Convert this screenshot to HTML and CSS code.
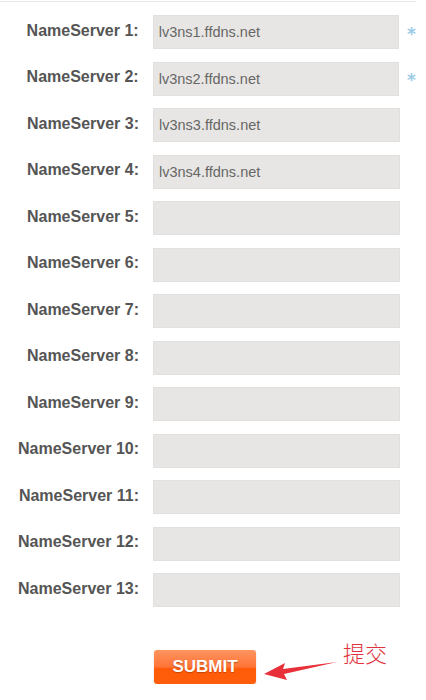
FILE: index.html
```html
<!DOCTYPE html>
<html lang="en">
<head>
    <meta charset="UTF-8">
    <meta name="viewport" content="width=device-width, initial-scale=1.0">
    <title>NameServer</title>
    <link rel="stylesheet" href="styles.css">
</head>
<body>
<div class="panel">
    <form class="nsform">
        <div class="row">
            <label for="ns1">NameServer 1:</label>
            <input type="text" id="ns1" value="lv3ns1.ffdns.net">
            <span class="req">*</span>
        </div>
        <div class="row">
            <label for="ns2">NameServer 2:</label>
            <input type="text" id="ns2" value="lv3ns2.ffdns.net">
            <span class="req">*</span>
        </div>
        <div class="row">
            <label for="ns3">NameServer 3:</label>
            <input type="text" id="ns3" value="lv3ns3.ffdns.net">
        </div>
        <div class="row">
            <label for="ns4">NameServer 4:</label>
            <input type="text" id="ns4" value="lv3ns4.ffdns.net">
        </div>
        <div class="row">
            <label for="ns5">NameServer 5:</label>
            <input type="text" id="ns5">
        </div>
        <div class="row">
            <label for="ns6">NameServer 6:</label>
            <input type="text" id="ns6">
        </div>
        <div class="row">
            <label for="ns7">NameServer 7:</label>
            <input type="text" id="ns7">
        </div>
        <div class="row">
            <label for="ns8">NameServer 8:</label>
            <input type="text" id="ns8">
        </div>
        <div class="row">
            <label for="ns9">NameServer 9:</label>
            <input type="text" id="ns9">
        </div>
        <div class="row">
            <label for="ns10">NameServer 10:</label>
            <input type="text" id="ns10">
        </div>
        <div class="row">
            <label for="ns11">NameServer 11:</label>
            <input type="text" id="ns11">
        </div>
        <div class="row">
            <label for="ns12">NameServer 12:</label>
            <input type="text" id="ns12">
        </div>
        <div class="row">
            <label for="ns13">NameServer 13:</label>
            <input type="text" id="ns13">
        </div>

        <div class="actions">
            <button type="button" class="submit">SUBMIT</button>
            <svg class="arrow" width="76" height="24" viewBox="0 0 76 24">
                <path d="M74 4 L20 11 L22 5 L1 16 L24 22 L21 16 Z" fill="#e8303a"/>
            </svg>
            <span class="note">提交</span>
        </div>
    </form>
</div>
</body>
</html>
```

FILE: styles.css
```css
body {
    margin: 0;
    background: #fff;
    font-family: "Liberation Sans", Arial, sans-serif;
}

.panel {
    width: 416px;
    border-top: 1px solid #e6e6e6;
    margin-top: 1px;
    padding-top: 13px;
}

.row {
    display: flex;
    align-items: center;
    height: 34px;
    margin-bottom: 12.5px;
}

.row label {
    width: 139px;
    text-align: right;
    font-size: 16px;
    font-weight: bold;
    color: #555;
    margin-right: 14px;
    margin-top: -3px;
}

.row input {
    width: 247px;
    height: 34px;
    box-sizing: border-box;
    margin: 0;
    border: 1px solid #e2e0de;
    background: #e8e6e4;
    padding: 0 5px;
    font-family: "Liberation Sans", Arial, sans-serif;
    font-size: 14.5px;
    color: #666;
    outline: none;
}

.req {
    margin-left: 8px;
    color: #9ccbe8;
    font-family: "DejaVu Sans", sans-serif;
    font-weight: bold;
    font-size: 17px;
    line-height: 17px;
    height: 11px;
    margin-top: -2px;
}

.actions {
    display: flex;
    align-items: flex-start;
    padding-left: 154px;
    margin-top: 33px;
}

.submit {
    width: 102px;
    height: 34px;
    margin-top: 10px;
    border: 0;
    border-radius: 3px;
    background: linear-gradient(#ff9460, #ff7436 50%, #ff5a08 55%, #ff5e0c);
    color: #fff;
    font-family: "Liberation Sans", Arial, sans-serif;
    font-weight: bold;
    font-size: 17px;
    text-shadow: 0 1px 1px rgba(120, 40, 0, 0.45);
    box-shadow: 0 1px 2px rgba(0, 0, 0, 0.15);
    padding: 0;
}

.arrow {
    margin-left: 7px;
    margin-top: 18px;
}

.note {
    margin-left: 4px;
    font-family: "Noto Sans CJK SC", sans-serif;
    font-weight: 300;
    font-size: 22px;
    line-height: 24px;
    color: #e0323c;
}
```
